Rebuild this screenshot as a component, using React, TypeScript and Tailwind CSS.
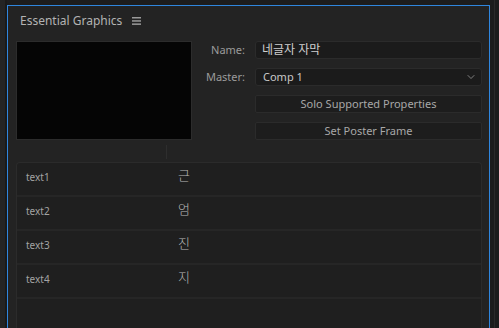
import { ChevronDown } from 'lucide-react';

const rows = [
  { name: 'text1', value: '근' },
  { name: 'text2', value: '엄' },
  { name: 'text3', value: '진' },
  { name: 'text4', value: '지' },
];

const font = 'font-["Noto_Sans","Noto_Sans_CJK_KR",sans-serif]';

export default function App() {
  return (
    <div className={`w-[499px] h-[328px] overflow-hidden bg-[#1d1d1d] flex ${font}`}>
      {/* left dock edge */}
      <div className="w-[7px] flex">
        <div className="w-[5px] bg-[#242424]" />
        <div className="w-[2px] bg-[#1a1a1a]" />
      </div>

      {/* panel */}
      <div className="w-[483px] mt-[5px] border-l border-t border-r border-[#2f86de] bg-[#232323] flex flex-col">
        {/* header */}
        <div className="h-[29px] flex items-center pl-[12px] gap-[10px]">
          <span className="text-[12px] text-[#b3b3b3] leading-none">Essential Graphics</span>
          <svg width="9" height="8" viewBox="0 0 9 8" className="mt-[1px]">
            <rect x="0" y="0" width="9" height="1.5" fill="#9a9a9a" />
            <rect x="0" y="3.2" width="9" height="1.5" fill="#9a9a9a" />
            <rect x="0" y="6.4" width="9" height="1.5" fill="#9a9a9a" />
          </svg>
        </div>

        {/* top section */}
        <div className="flex pl-[8px] pr-[7px] pt-[6px]">
          <div className="w-[176px] h-[99px] bg-[#050505] border border-[#2c2c2c]" />
          <div className="flex-1 grid grid-cols-[53px_1fr] gap-x-[10px] gap-y-[9px] auto-rows-[18px]">
            <div className="text-[11px] text-[#9b9b9b] text-right self-center">Name:</div>
            <div className="bg-[#1b1b1b] border border-[#2b2b2b] rounded-[3px] flex items-center px-[6px] text-[12px] text-[#cfcfcf]">
              네글자 자막
            </div>

            <div className="text-[11px] text-[#9b9b9b] text-right self-center">Master:</div>
            <div className="bg-[#1b1b1b] border border-[#2b2b2b] rounded-[3px] flex items-center justify-between pl-[7px] pr-[4px] text-[11px] text-[#c8c8c8]">
              <span>Comp 1</span>
              <ChevronDown size={12} strokeWidth={1.5} className="text-[#a0a0a0]" />
            </div>

            <div />
            <div className="bg-[#1d1d1d] border border-[#2b2b2b] rounded-[2px] flex items-center justify-center text-[11px] text-[#a8a8a8]">
              Solo Supported Properties
            </div>

            <div />
            <div className="bg-[#1d1d1d] border border-[#2b2b2b] rounded-[2px] flex items-center justify-center text-[11px] text-[#a8a8a8]">
              Set Poster Frame
            </div>
          </div>
        </div>

        {/* splitter */}
        <div className="h-[22px] pl-[158px] pt-[5px]">
          <div className="w-px h-[14px] bg-[#2e2e2e]" />
        </div>

        {/* property list */}
        <div className="flex-1 ml-[8px] mr-[7px] bg-[#1f1f1f] border-l border-t border-r border-[#2b2b2b] rounded-t-[4px] flex flex-col">
          {rows.map((row) => (
            <div key={row.name} className="h-[34px] border-b-2 border-[#262626] flex items-center">
              <span className="w-[161px] pl-[9px] text-[10px] text-[#a3a3a3] -mt-[3px]">{row.name}</span>
              <span className="text-[13px] font-light text-[#b8b8b8] leading-none -mt-[8px]">{row.value}</span>
            </div>
          ))}
        </div>
      </div>

      {/* right dock edge */}
      <div className="flex-1 flex">
        <div className="w-[4px] bg-[#1c1c1c]" />
        <div className="w-px bg-[#2a2a2a]" />
        <div className="flex-1 bg-[#1c1c1c]" />
      </div>
    </div>
  );
}
